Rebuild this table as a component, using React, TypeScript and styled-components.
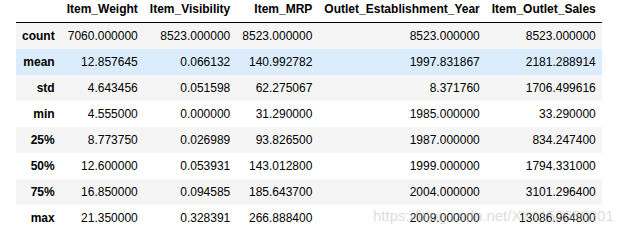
import React from 'react';
import styled, { createGlobalStyle } from 'styled-components';

const columns = [
  'Item_Weight',
  'Item_Visibility',
  'Item_MRP',
  'Outlet_Establishment_Year',
  'Item_Outlet_Sales',
];

const rows: [string, string[]][] = [
  ['count', ['7060.000000', '8523.000000', '8523.000000', '8523.000000', '8523.000000']],
  ['mean', ['12.857645', '0.066132', '140.992782', '1997.831867', '2181.288914']],
  ['std', ['4.643456', '0.051598', '62.275067', '8.371760', '1706.499616']],
  ['min', ['4.555000', '0.000000', '31.290000', '1985.000000', '33.290000']],
  ['25%', ['8.773750', '0.026989', '93.826500', '1987.000000', '834.247400']],
  ['50%', ['12.600000', '0.053931', '143.012800', '1999.000000', '1794.331000']],
  ['75%', ['16.850000', '0.094585', '185.643700', '2004.000000', '3101.296400']],
  ['max', ['21.350000', '0.328391', '266.888400', '2009.000000', '13086.964800']],
];

const App: React.FC = () => {
  return (
    <Page>
      <GlobalStyle />
      <Frame>
        <DataFrame>
          <thead>
            <tr>
              <HeadCell />
              {columns.map(col => (
                <HeadCell key={col}>{col}</HeadCell>
              ))}
            </tr>
          </thead>
          <tbody>
            {rows.map(([label, values], i) => (
              <Row key={label} $odd={i % 2 === 0} $hover={label === 'mean'}>
                <IndexCell>{label}</IndexCell>
                {values.map((v, j) => (
                  <Cell key={j}>{v}</Cell>
                ))}
              </Row>
            ))}
          </tbody>
        </DataFrame>
        <Watermark>https://blog.csdn.net/XX1152656201</Watermark>
      </Frame>
    </Page>
  );
};

export default App;

const GlobalStyle = createGlobalStyle`
  html, body {
    margin: 0;
    padding: 0;
    background: #fff;
  }
`;

const Page = styled.div`
  width: 631px;
  height: 240px;
  overflow: hidden;
  padding-left: 16px;
  box-sizing: border-box;
  font-family: 'Liberation Sans', Arial, sans-serif;
  font-size: 12px;
  color: #000;
`;

const Frame = styled.div`
  position: relative;
  display: inline-block;
`;

const DataFrame = styled.table`
  border-collapse: collapse;
  border-spacing: 0;
  border: none;
  table-layout: auto;

  thead {
    border-bottom: 1px solid #000;
    vertical-align: bottom;
  }
`;

const HeadCell = styled.th`
  text-align: right;
  font-weight: bold;
  padding: 2px 6px 6px;
  line-height: 14px;
  white-space: nowrap;
`;

const Row = styled.tr<{ $odd: boolean; $hover: boolean }>`
  background: ${p => (p.$hover ? '#dbecfc' : p.$odd ? '#f5f5f5' : '#fff')};
`;

const IndexCell = styled.th`
  text-align: right;
  font-weight: bold;
  padding: 6px;
  line-height: 14px;
  white-space: nowrap;
`;

const Cell = styled.td`
  text-align: right;
  padding: 6px;
  line-height: 14px;
  white-space: nowrap;
`;

const Watermark = styled.div`
  position: absolute;
  left: 357px;
  top: 207px;
  font-family: 'Liberation Sans', Arial, sans-serif;
  font-size: 15px;
  color: rgba(190, 190, 190, 0.55);
  white-space: nowrap;
  pointer-events: none;
`;
